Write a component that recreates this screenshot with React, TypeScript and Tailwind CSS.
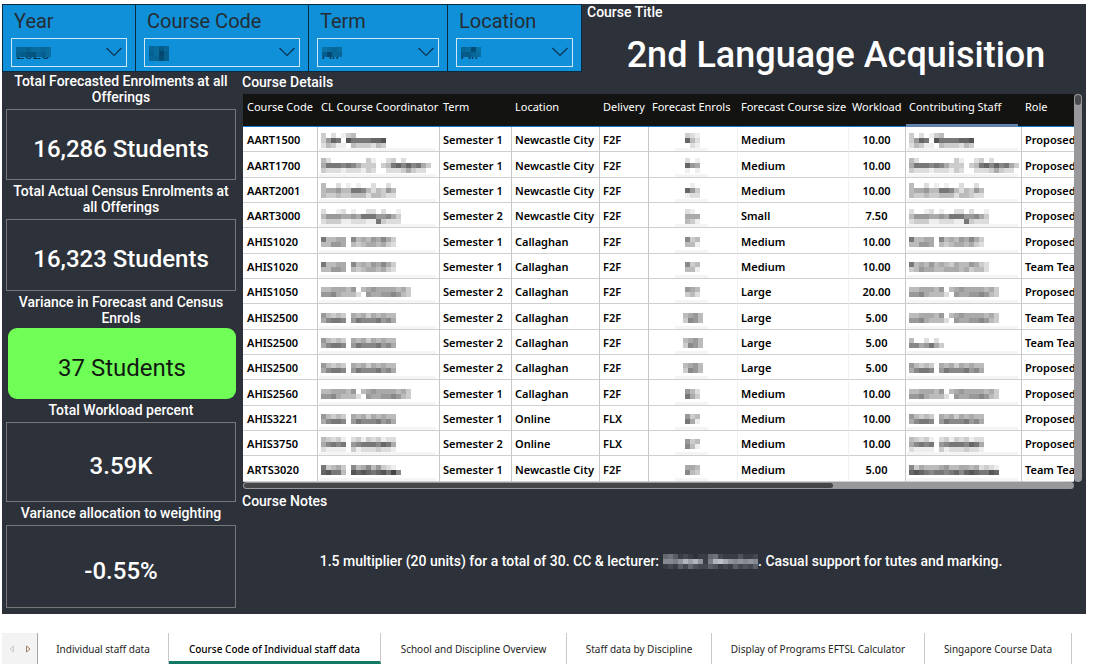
import React from "react";

const DIN = "font-['Roboto','Liberation_Sans',sans-serif]";
const UI = "font-['Noto_Sans','Open_Sans',sans-serif]";

type MosaicProps = { rows: string[]; tone?: "grey" | "blue" | "dark"; cell?: number };

const ramps = {
  grey: (v: number) => `rgb(${v * 17},${v * 17},${v * 17})`,
  dark: (v: number) => `rgb(${45 + v * 11},${49 + v * 11},${57 + v * 11})`,
  blue: (v: number) => `rgb(${v},${60 + v * 6},${95 + v * 8})`,
};

function Mosaic({ rows, tone = "grey", cell = 5 }: MosaicProps) {
  const w = rows[0].length * cell;
  const h = rows.length * cell;
  return (
    <svg width={w} height={h} viewBox={`0 0 ${w} ${h}`} shapeRendering="crispEdges" className="block" aria-hidden="true">
      {rows.flatMap((row, y) =>
        row.split("").map((c, x) =>
          c === "." ? null : (
            <rect key={`${x}-${y}`} x={x * cell} y={y * cell} width={cell} height={cell} fill={ramps[tone](parseInt(c, 16))} />
          ),
        ),
      )}
    </svg>
  );
}

const names: Record<string, string[]> = {
  a: ["cfdfecbffffff", "c967f57777665", "dbceefbcccdbc"],
  b: ["bdfffffffceffdcfdfffff", "a777878acccfcb768687ac", "cdddedddecdffdddcacddf"],
  c: ["bffdfefeffdffdf", "baa9bb778bdbc9b", "bccbccbbbdbbcdd"],
  d: ["dffedfeffddfdffe", "b999aa9a777998ac", "dccceedddee7cddd"],
  e: ["7bbaaf8bab9a8ac", "bb99afbcbaabacd"],
  f: ["7bab9babcabb9acd", "cb9aabbaaabacbbd"],
  g: ["bbaaab9fba9aaaabac", "998abbbdf9aa9989bc"],
  h: ["9bcbcfabacababb", "a8778f97888798a"],
  i: ["bcdcefdcecdcedd", "a8787f98777867a", "deeeefcedddcdde"],
  j: ["bffdfdf", "88a97ac"],
  k: ["7cbacf8ba8b9cdef", "6577bf5656765748"],
  l: ["8cabbba9bbaabadcde", "656787787686567756"],
};

const enrols: string[][] = [
  ["cde", "6bd", "fde"],
  ["dfe", "69a", "efe"],
  ["fef", "69c", "edd"],
  ["def", "aaa", "bce"],
  ["8cb", "bbe"],
  ["8cb", "bbe"],
  ["9ab", "cbd"],
  ["ba9b", "c89b"],
  ["ba9b", "c89b"],
  ["ba9b", "c89b"],
  ["9bd", "7ac"],
  ["9cb", "7ae"],
  ["9cb", "8be"],
  ["aab", "8bc"],
];

type Row = [string, string, string, string, string, string, string, string, string];
const S1 = "Semester 1";
const S2 = "Semester 2";
const NC = "Newcastle City";
const rows: Row[] = [
  ["AART1500", "a", S1, NC, "F2F", "Medium", "10.00", "a", "Proposed"],
  ["AART1700", "b", S1, NC, "F2F", "Medium", "10.00", "b", "Proposed"],
  ["AART2001", "c", S1, NC, "F2F", "Medium", "10.00", "c", "Proposed"],
  ["AART3000", "d", S2, NC, "F2F", "Small", "7.50", "d", "Proposed"],
  ["AHIS1020", "e", S1, "Callaghan", "F2F", "Medium", "10.00", "e", "Proposed"],
  ["AHIS1020", "e", S1, "Callaghan", "F2F", "Medium", "10.00", "f", "Team Teaching"],
  ["AHIS1050", "g", S2, "Callaghan", "F2F", "Large", "20.00", "g", "Proposed"],
  ["AHIS2500", "h", S2, "Callaghan", "F2F", "Large", "5.00", "g", "Team Teaching"],
  ["AHIS2500", "h", S2, "Callaghan", "F2F", "Large", "5.00", "j", "Team Teaching"],
  ["AHIS2500", "h", S2, "Callaghan", "F2F", "Large", "5.00", "h", "Proposed"],
  ["AHIS2560", "g", S1, "Callaghan", "F2F", "Medium", "10.00", "g", "Proposed"],
  ["AHIS3221", "h", S1, "Online", "FLX", "Medium", "10.00", "h", "Proposed"],
  ["AHIS3750", "i", S2, "Online", "FLX", "Medium", "10.00", "i", "Proposed"],
  ["ARTS3020", "k", S1, NC, "F2F", "Medium", "5.00", "l", "Team Teaching"],
];

const columns = [
  { name: "Course Code", width: "w-[75px]" },
  { name: "CL Course Coordinator", width: "w-[122px]" },
  { name: "Term", width: "w-[72px]" },
  { name: "Location", width: "w-[88px]" },
  { name: "Delivery", width: "w-[49px]" },
  { name: "Forecast Enrols", width: "w-[89px]" },
  { name: "Forecast Course size", width: "w-[111px]" },
  { name: "Workload", width: "w-[57px]" },
  { name: "Contributing Staff", width: "w-[116px]" },
  { name: "Role", width: "w-[200px]" },
];

function Slicer({ id, label, value, width, mosaic, tall }: { id: string; label: string; value: string; width: string; mosaic: string[]; tall?: boolean }) {
  return (
    <div className={`${width} border border-l-0 border-[#0a2a40] bg-[#1090d8] pl-2 pr-2 first:border-l`}>
      <label htmlFor={id} className="block pl-[3px] pt-[1px] text-[20px] leading-[30px] text-[#252c33]">
        {label}
      </label>
      <div className="relative mt-[2px]">
        <select id={id} className="block h-[29px] w-full appearance-none rounded-none border border-[#cfe6f5] bg-transparent px-1 pt-1 text-[15px] text-[#0b3350] outline-none">
          <option>{value}</option>
        </select>
        <div className={`pointer-events-none absolute left-[5px] ${tall ? "top-2" : "top-[9px]"}`}>
          <Mosaic rows={mosaic} tone="blue" />
        </div>
        <svg className="pointer-events-none absolute right-[5px] top-[9px]" width="16" height="10" viewBox="0 0 16 10" fill="none" stroke="#0b3350" strokeWidth="1.2" aria-hidden="true">
          <path d="M0.5 1 L8 8.5 L15.5 1" />
        </svg>
      </div>
    </div>
  );
}

function Stat({ label, value, height, green }: { label: string; value: string; height: string; green?: boolean }) {
  return (
    <section className={`flex flex-col ${green ? "gap-[2px]" : "gap-1"}`}>
      <h2 className="text-center text-[14px] font-medium leading-4">{label}</h2>
      <div
        className={`flex items-center justify-center pt-2 text-[24px] ${height} ${
          green ? "ml-[2px] rounded-[9px] bg-[#70ff57] text-[#101810]" : "border border-[#77777a] font-medium"
        }`}
      >
        {value}
      </div>
    </section>
  );
}

function Strip({ place }: { place: string }) {
  return <span className={`absolute -bottom-px h-1 bg-[#f4f5f5] ${place}`} />;
}

function CourseTable() {
  const cell = "relative overflow-hidden whitespace-nowrap border-b border-[#cfcfcf] pl-[3px] pr-1 pb-0 pt-[2px] first:pl-1";
  const line = "border-r border-r-[#c8c8c8]";
  const faint = "border-r border-r-[#f2f2f2]";
  return (
    <table className={`${UI} h-[388px] w-[979px] table-fixed border-separate border-spacing-0 bg-white text-[11px] leading-4 text-black`}>
      <thead>
        <tr className="h-[33px] bg-[#131311] text-white">
          {columns.map((c) => (
            <th key={c.name} className={`${c.width} relative whitespace-nowrap border-b border-b-[#1678cf] pb-0 pl-[3px] pr-1 pt-[5px] text-left align-top font-normal first:pl-1`}>
              {c.name}
              {c.name === "Contributing Staff" && <span className="absolute -bottom-px left-0 right-1 h-[3px] bg-[#5f83ad]" />}
            </th>
          ))}
        </tr>
      </thead>
      <tbody className="font-semibold">
        {rows.map((r, i) => (
          <tr key={i}>
            <td className={`${cell} ${line}`}>{r[0]}</td>
            <td className={`${cell} ${line}`}>
              <Mosaic rows={names[r[1]]} />
              <Strip place="left-px right-[3px]" />
            </td>
            <td className={`${cell} ${line}`}>{r[2]}</td>
            <td className={`${cell} ${line}`}>{r[3]}</td>
            <td className={`${cell} ${line}`}>{r[4]}</td>
            <td className={`${cell} ${faint}`}>
              <div className="flex justify-center">
                <Mosaic rows={enrols[i]} />
              </div>
              <Strip place="left-[26px] right-[29px]" />
            </td>
            <td className={`${cell} ${faint}`}>{r[5]}</td>
            <td className={`${cell} ${line} text-center`}>{r[6]}</td>
            <td className={`${cell} ${line}`}>
              <Mosaic rows={names[r[7]]} />
              <Strip place="left-px right-[3px]" />
            </td>
            <td className={cell}>{r[8]}</td>
          </tr>
        ))}
      </tbody>
    </table>
  );
}

const tabs = [
  { name: "Individual staff data", width: "w-[131px]" },
  { name: "Course Code of Individual staff data", width: "w-[212px]", active: true },
  { name: "School and Discipline Overview", width: "w-[186px]" },
  { name: "Staff data by Discipline", width: "w-[145px]" },
  { name: "Display of Programs EFTSL Calculator", width: "w-[213px]" },
  { name: "Singapore Course Data", width: "w-[147px]" },
];

export default function App() {
  return (
    <div className={`${DIN} bg-white pl-[2px] pr-[10px] pt-1`}>
      <main className="bg-[#2d3139] text-white">
        <header className="flex h-[68px]">
          <div className="flex shrink-0">
            <Slicer id="year" label="Year" value="2025" width="w-[134px]" mosaic={["7768878", "6544768"]} />
            <Slicer id="code" label="Course Code" value="All" width="w-[173px]" mosaic={["7857", "6826", "7736"]} tall />
            <Slicer id="term" label="Term" value="All" width="w-[139px]" mosaic={["9878", "6277"]} />
            <Slicer id="location" label="Location" value="All" width="w-[134px]" mosaic={["7839", "5578"]} />
          </div>
          <div className="min-w-0 flex-1 pl-1">
            <h2 className="pl-px text-[14px] font-medium leading-4">Course Title</h2>
            <h1 className="pt-[13px] text-center text-[36px] font-medium leading-[44px]">2nd Language Acquisition</h1>
          </div>
        </header>

        <div className="flex">
          <aside className="flex w-[238px] shrink-0 flex-col gap-[3px] pb-[6px] pl-1 pr-1 pt-px">
            <Stat label="Total Forecasted Enrolments at all Offerings" value="16,286 Students" height="h-[71px]" />
            <Stat label="Total Actual Census Enrolments at all Offerings" value="16,323 Students" height="h-[72px]" />
            <Stat label="Variance in Forecast and Census Enrols" value="37 Students" height="h-[71px]" green />
            <Stat label="Total Workload percent" value="3.59K" height="h-[80px]" />
            <Stat label="Variance allocation to weighting" value="-0.55%" height="h-[83px]" />
          </aside>

          <section className="min-w-0 flex-1 pr-1 pt-[2px]">
            <h2 className="pl-[2px] text-[14px] font-medium leading-4">Course Details</h2>
            <div className="mt-1 flex pl-[3px]">
              <div className="h-[388px] min-w-0 flex-1 overflow-hidden">
                <CourseTable />
              </div>
              <div className="w-2 rounded-full bg-[#98989c] p-px">
                <div className="h-[10px] rounded-full bg-[#4a4b4f]" />
              </div>
            </div>
            <div className="ml-[3px] mr-2 h-[7px] rounded-full bg-[#98989c] p-px">
              <div className="h-full w-[71%] rounded-full bg-[#45464a]" />
            </div>
            <h2 className="pl-[2px] pt-1 text-[14px] font-medium leading-4">Course Notes</h2>
            <p className="flex items-center justify-center pt-11 text-[14px] font-medium leading-4">
              1.5 multiplier (20 units) for a total of 30. CC &amp; lecturer:
              <span className="ml-1">
                <Mosaic tone="dark" rows={["5641210115621113112", "8879cac917cdb989898", "1214253224312142324"]} />
              </span>
              <span>. Casual support for tutes and marking.</span>
            </p>
          </section>
        </div>
      </main>

      <nav className={`${UI} mt-[19px] flex h-[31px] text-[10px] text-[#252423]`}>
        <div className="flex w-9 shrink-0 items-center justify-center gap-3 border-r border-[#a6a6a6] bg-[#f3f3f3]">
          <button aria-label="Previous page">
            <svg width="5" height="8" viewBox="0 0 5 8" fill="none" stroke="#c8c8c8">
              <path d="M4.5 1 V7 L1 4 Z" />
            </svg>
          </button>
          <button aria-label="Next page">
            <svg width="5" height="8" viewBox="0 0 5 8" fill="none" stroke="#a08060">
              <path d="M0.5 1 V7 L4 4 Z" />
            </svg>
          </button>
        </div>
        {tabs.map((t) => (
          <a
            key={t.name}
            href="#"
            className={`${t.width} flex shrink-0 items-center justify-center whitespace-nowrap border-r border-r-[#c8c8c8] ${
              t.active ? "border-b-[3px] border-b-[#117865] pt-1 font-medium text-black" : "pt-px"
            }`}
          >
            {t.name}
          </a>
        ))}
      </nav>
    </div>
  );
}
